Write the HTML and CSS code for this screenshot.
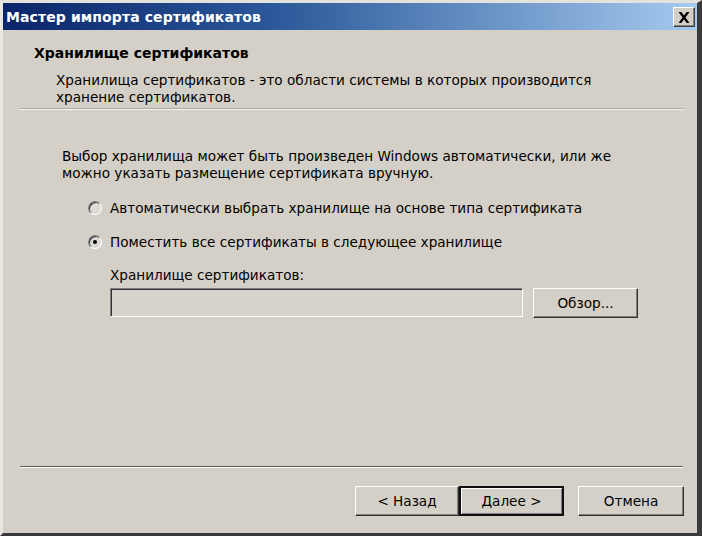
FILE: index.html
```html
<!DOCTYPE html>
<html lang="ru">
<head>
<meta charset="utf-8">
<title>Мастер импорта сертификатов</title>
<link rel="stylesheet" href="styles.css">
</head>
<body>
<div class="window">
  <div class="titlebar">
    <span class="title">Мастер импорта сертификатов</span>
    <span class="close">
      <svg width="12" height="11" viewBox="0 0 12 11"><path d="M0.5 0h2.8l2.7 3.4 2.7-3.4h2.8l-4 5.5 4 5.5h-2.8l-2.7-3.4-2.7 3.4h-2.8l4-5.5z" fill="#000"/></svg>
    </span>
  </div>
  <div class="header">
    <div class="h-title">Хранилище сертификатов</div>
    <div class="h-desc">Хранилища сертификатов - это области системы в которых производится<br>хранение сертификатов.</div>
  </div>
  <div class="sep sep-top"></div>
  <div class="content">
    <p class="intro">Выбор хранилища может быть произведен Windows автоматически, или же<br>можно указать размещение сертификата вручную.</p>
    <div class="radio-row first"><span class="radio"></span><span>Автоматически выбрать хранилище на основе типа сертификата</span></div>
    <div class="radio-row"><span class="radio checked"></span><span>Поместить все сертификаты в следующее хранилище</span></div>
    <div class="store">
      <div class="store-label">Хранилище сертификатов:</div>
      <div class="store-row">
        <div class="field"></div>
        <div class="btn browse">Обзор...</div>
      </div>
    </div>
  </div>
  <div class="sep sep-bottom"></div>
  <div class="buttons">
    <div class="btn">&lt; Назад</div>
    <div class="btn default">Далее &gt;</div>
    <div class="btn cancel">Отмена</div>
  </div>
</div>
</body>
</html>
```
FILE: styles.css
```css
* { box-sizing: border-box; }
html, body { margin: 0; padding: 0; }
body {
  width: 702px;
  height: 536px;
  background: #d4d0c8;
  font-family: "DejaVu Sans", Tahoma, sans-serif;
  font-size: 13.6px;
  color: #000;
  overflow: hidden;
}
.window {
  width: 702px;
  height: 536px;
  display: flex;
  flex-direction: column;
  background: #d4d0c8;
  border-top: 3px solid #e4e2dc;
  border-left: 3px solid #e8e6e0;
  border-right: 5px solid #3a3a3a;
  border-bottom: 3px solid #3a3a3a;
}
.titlebar {
  height: 27px;
  flex: none;
  display: flex;
  align-items: center;
  justify-content: space-between;
  padding: 0 2px 0 3px;
  background: linear-gradient(to right, #0a246a 0%, #2c5a9a 40%, #a6caf0 100%);
}
.title {
  color: #fff;
  font-weight: bold;
  font-size: 14px;
  letter-spacing: 0.1px;
}
.close {
  width: 22px;
  height: 20px;
  display: flex;
  align-items: center;
  justify-content: center;
  background: #d4d0c8;
  border-top: 1px solid #fff;
  border-left: 1px solid #fff;
  border-right: 1px solid #404040;
  border-bottom: 1px solid #404040;
  box-shadow: inset -1px -1px 0 #808080;
  margin-top: 1px;
}
.header {
  flex: none;
  padding: 14px 0 0 31px;
}
.h-title {
  font-weight: bold;
  font-size: 14px;
  line-height: 18px;
}
.h-desc {
  margin: 10px 0 0 22px;
  line-height: 17px;
}
.sep {
  flex: none;
  height: 2px;
  border-top: 1px solid #a9a7a1;
  border-bottom: 1px solid #f6f5f1;
  margin: 0 14px 0 17px;
}
.sep-top { margin-top: 2px; }
.sep-bottom {
  border-top-color: #5a5a5a;
  border-bottom-color: #ffffff;
}
.content {
  flex: 1;
  padding: 38px 0 0 59px;
}
.intro {
  margin: 0;
  line-height: 17px;
}
.radio-row {
  display: flex;
  align-items: center;
  height: 20px;
  margin: 14px 0 0 26px;
}
.radio-row.first { margin-top: 16px; }
.radio {
  width: 14px;
  height: 14px;
  border-radius: 50%;
  margin-right: 8px;
  border-top: 1px solid #808080;
  border-left: 1px solid #808080;
  border-right: 1px solid #ffffff;
  border-bottom: 1px solid #ffffff;
  background: #dcdad5;
  box-shadow: inset 1px 1px 0 #303030;
  display: flex;
  align-items: center;
  justify-content: center;
}
.radio.checked::after {
  content: "";
  width: 4px;
  height: 4px;
  border-radius: 50%;
  background: #000;
}
.store {
  margin: 15px 0 0 48px;
}
.store-label {
  line-height: 17px;
}
.store-row {
  display: flex;
  gap: 10px;
  margin-top: 4px;
}
.field {
  width: 413px;
  height: 29px;
  background: #d6d3cd;
  border-top: 1px solid #808080;
  border-left: 1px solid #808080;
  border-right: 1px solid #ffffff;
  border-bottom: 1px solid #ffffff;
  box-shadow: inset 1px 1px 0 #303030, inset -1px -1px 0 #d4d0c8;
}
.btn {
  width: 104px;
  height: 30px;
  display: flex;
  align-items: center;
  justify-content: center;
  background: #d4d0c8;
  border-top: 1px solid #ffffff;
  border-left: 1px solid #ffffff;
  border-right: 1px solid #303030;
  border-bottom: 1px solid #303030;
  box-shadow: inset -1px -1px 0 #808080;
}
.browse { width: 105px; }
.buttons {
  flex: none;
  display: flex;
  justify-content: flex-end;
  padding: 18px 13px 17px 0;
}
.btn.default {
  width: 105px;
  border: 2px solid #101010;
  box-shadow: inset 1px 1px 0 #fff, inset -1px -1px 0 #808080;
}
.btn.cancel {
  margin-left: 14px;
  width: 106px;
}
```
